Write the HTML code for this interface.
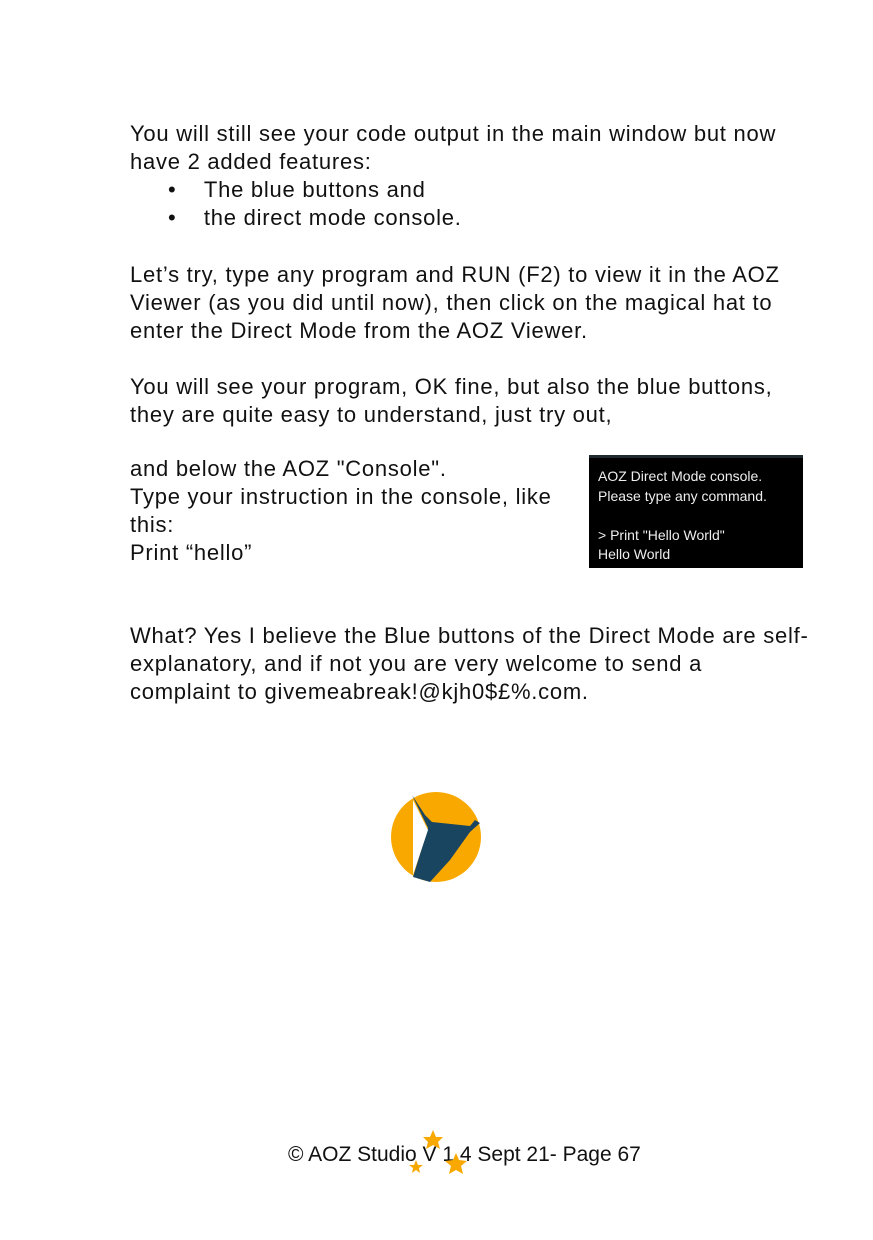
<!DOCTYPE html>
<html><head><style>
body{margin:0;width:873px;height:1240px;background:#fff;position:relative;font-family:"Liberation Sans",sans-serif;color:#111;}
.t{position:absolute;left:130px;font-size:22px;letter-spacing:0.75px;line-height:28px;white-space:nowrap;}
.con{position:absolute;left:589px;top:455px;width:214px;height:113px;background:#000;border-top:3px solid #1e2a30;box-sizing:border-box;color:#eee;font-size:14px;line-height:19.5px;padding:9px 0 0 9px;}
</style></head><body>
<div class="t" style="top:120px">You will still see your code output in the main window but now<br>have 2 added features:</div>
<div class="t" style="top:176px;left:168px">•&nbsp;&nbsp;&nbsp;&nbsp;The blue buttons and<br>•&nbsp;&nbsp;&nbsp;&nbsp;the direct mode console.</div>
<div class="t" style="top:261px">Let’s try, type any program and RUN (F2) to view it in the AOZ<br>Viewer (as you did until now), then click on the magical hat to<br>enter the Direct Mode from the AOZ Viewer.</div>
<div class="t" style="top:373px">You will see your program, OK fine, but also the blue buttons,<br>they are quite easy to understand, just try out,</div>
<div class="t" style="top:455px">and below the AOZ "Console".<br>Type your instruction in the console, like<br>this:<br>Print “hello”</div>
<div class="con">AOZ Direct Mode console.<br>Please type any command.<br><br>&gt; Print "Hello World"<br>Hello World</div>
<div class="t" style="top:622px">What? Yes I believe the Blue buttons of the Direct Mode are self-<br>explanatory, and if not you are very welcome to send a<br>complaint to givemeabreak!@kjh0$£%.com.</div>
<svg style="position:absolute;left:380px;top:780px" width="110" height="110" viewBox="380 780 110 110">
<circle cx="436" cy="837" r="45" fill="#f9a800"/>
<path d="M412 795 L425 815 L432 822 L470 826 L475 820 L480 823 L470 832 L450 860 L430 882 L413 877 L428 828 Z" fill="#1a4560"/>
<path d="M413 800 L428 830 L413 875 Z" fill="#fff"/>
</svg>
<div class="t" style="top:1141px;left:288px;font-size:21px;letter-spacing:0">© AOZ Studio V 1.4 Sept 21- Page 67</div>
<svg style="position:absolute;left:400px;top:1125px" width="80" height="55">
<path d="M33 5 l3 7 7 0 -5 5 2 7 -7 -4 -7 4 2 -7 -5 -5 7 0z" fill="#f9a800"/>
<path d="M56 28 l3 7 8 1 -6 5 2 8 -7 -4 -7 4 2 -8 -6 -5 8 -1z" fill="#f9a800"/>
<path d="M16 35 l2 5 5 0 -4 3 1 5 -4 -3 -4 3 1 -5 -4 -3 5 0z" fill="#f9a800"/>
</svg>
</body></html>
